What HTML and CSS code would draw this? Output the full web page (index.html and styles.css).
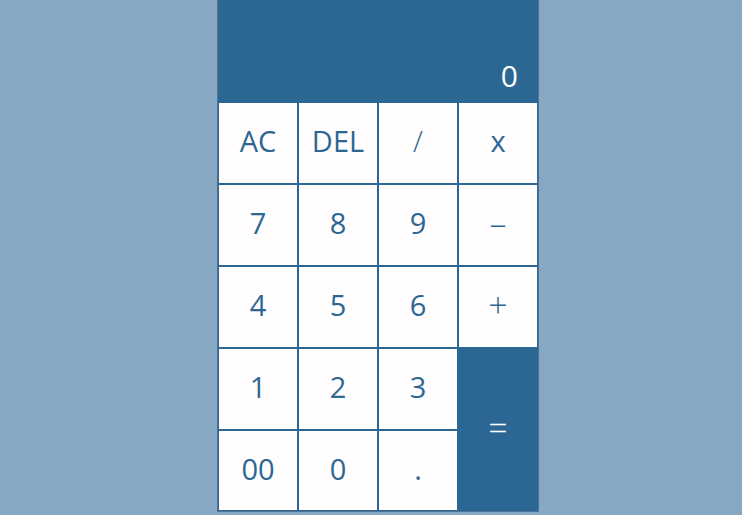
FILE: index.html
```html
<!DOCTYPE html>
<html>
<head>
<meta charset="utf-8">
<link rel="stylesheet" href="styles.css">
</head>
<body>
<div class="calc">
  <div class="display">0</div>
  <div class="keys">
    <button class="key">AC</button>
    <button class="key">DEL</button>
    <button class="key thin">/</button>
    <button class="key">x</button>
    <button class="key">7</button>
    <button class="key">8</button>
    <button class="key">9</button>
    <button class="key thin big">–</button>
    <button class="key">4</button>
    <button class="key">5</button>
    <button class="key">6</button>
    <button class="key thin big">+</button>
    <button class="key">1</button>
    <button class="key">2</button>
    <button class="key">3</button>
    <button class="key equals thin big">=</button>
    <button class="key">00</button>
    <button class="key">0</button>
    <button class="key">.</button>
  </div>
</div>
</body>
</html>
```

FILE: styles.css
```css
html, body {
  margin: 0;
  padding: 0;
}
body {
  background: #87a8c3;
  font-family: "Open Sans", "Noto Sans", sans-serif;
  display: flex;
  justify-content: center;
  padding-left: 14px;
  height: 515px;
  overflow: hidden;
}
.calc {
  width: 320px;
  border: 1px solid #4f7299;
  border-top: none;
  background: #87a8c3;
  height: 511px;
}
.display {
  height: 102px;
  box-sizing: border-box;
  background: #2c6793;
  color: #ffffff;
  font-size: 30px;
  line-height: 30px;
  display: flex;
  align-items: flex-end;
  justify-content: flex-end;
  padding: 0 20px 11px 0;
}
.keys {
  display: grid;
  grid-template-columns: repeat(4, 80px);
  grid-template-rows: repeat(4, 82px) 81px;
}
.key {
  box-sizing: border-box;
  background: #fffdfd;
  border: 1px solid #2c6793;
  color: #2c6793;
  font-family: "Open Sans", "Noto Sans", sans-serif;
  font-size: 29px;
  padding: 0 0 5px 0;
  margin: 0;
  outline: none;
}
.thin {
  font-weight: 300;
}
.big {
  font-size: 34px;
}
.equals {
  grid-column: 4;
  grid-row: 4 / span 2;
  background: #2c6793;
  color: #ffffff;
}
```
